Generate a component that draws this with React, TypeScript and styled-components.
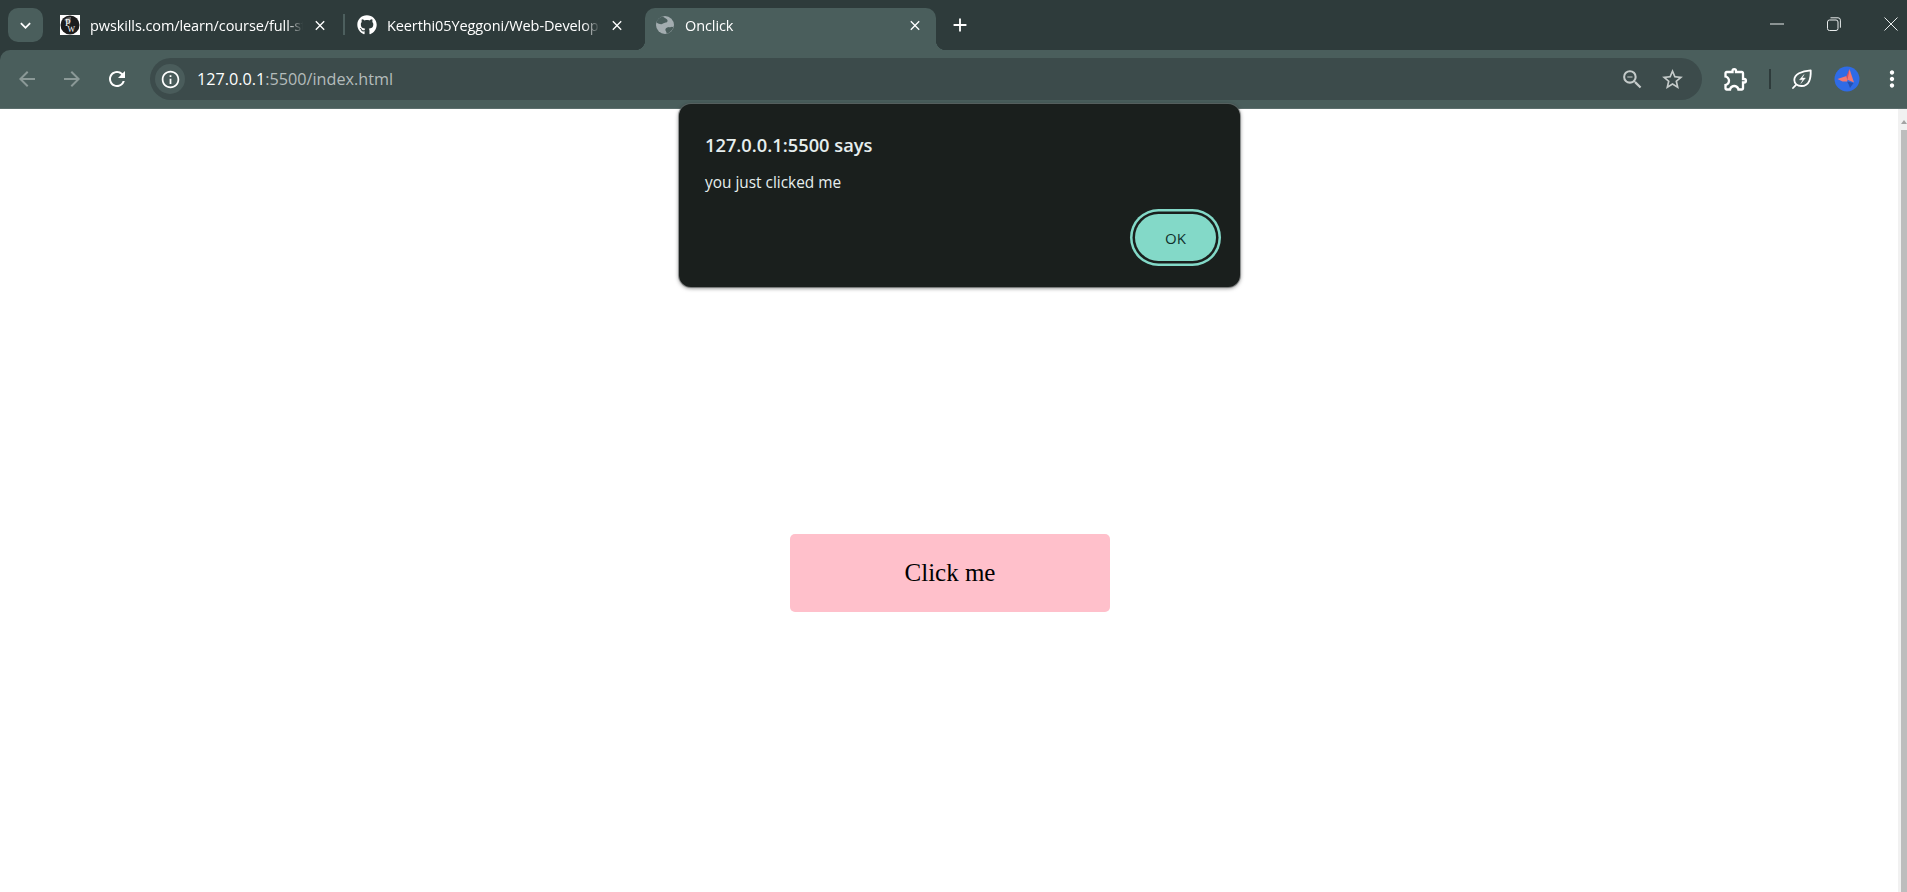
import React from 'react';
import styled, { createGlobalStyle } from 'styled-components';
import { FaGithub } from 'react-icons/fa';
import {
  MdArrowBack,
  MdArrowForward,
  MdClose,
  MdInfoOutline,
  MdKeyboardArrowDown,
  MdOutlineExtension,
  MdOutlineStarBorder,
  MdRefresh,
  MdZoomOut,
  MdAdd,
  MdMoreVert,
} from 'react-icons/md';

const GlobalStyle = createGlobalStyle`
  html, body {
    margin: 0;
    height: 100%;
    overflow: hidden;
    background: #fff;
  }
  #root {
    height: 100%;
  }
`;

const Window = styled.div`
  position: relative;
  display: flex;
  flex-direction: column;
  height: 892px;
  background: #2e3b3b;
  font-family: 'Open Sans', 'Noto Sans', sans-serif;
`;

const TabStrip = styled.div`
  display: flex;
  align-items: flex-end;
  height: 50px;
  color: #fff;
`;

const TabSearch = styled.button`
  display: flex;
  align-items: center;
  justify-content: center;
  width: 35px;
  height: 34px;
  margin: 0 9px 8px 8px;
  padding: 0;
  border: 0;
  border-radius: 10px;
  background: #4a5e5c;
  color: #fff;
  font-size: 21px;
`;

const Tab = styled.div<{ $width: number; $active?: boolean }>`
  position: relative;
  display: flex;
  align-items: center;
  flex: none;
  box-sizing: border-box;
  width: ${(p) => p.$width}px;
  height: 42px;
  margin-left: ${(p) => (p.$active ? 10 : 0)}px;
  padding: 0 ${(p) => (p.$active ? 13 : 10)}px 8px 8px;
  border-radius: 10px 10px 0 0;
  background: ${(p) => (p.$active ? '#4a5e5c' : 'transparent')};

  ${(p) =>
    p.$active &&
    `
    &::before, &::after {
      content: '';
      position: absolute;
      bottom: 0;
      width: 10px;
      height: 10px;
    }
    &::before {
      left: -10px;
      background: radial-gradient(circle at 0 0, transparent 10px, #4a5e5c 10.5px);
    }
    &::after {
      right: -10px;
      background: radial-gradient(circle at 100% 0, transparent 10px, #4a5e5c 10.5px);
    }
  `}
`;

const Favicon = styled.span`
  display: flex;
  flex: none;
  align-items: center;
  justify-content: center;
  width: 20px;
  height: 20px;
  margin-right: 10px;
  font-size: 20px;
  line-height: 0;
`;

const GlobeFavicon = styled(Favicon)`
  width: 18px;
  margin: 0 11px 0 3px;
`;

const TabTitle = styled.span`
  flex: 1;
  min-width: 0;
  margin-top: 2px;
  overflow: hidden;
  color: #fff;
  font-size: 14.5px;
  letter-spacing: -0.1px;
  line-height: 20px;
  white-space: nowrap;
  -webkit-mask-image: linear-gradient(to right, #000 calc(100% - 16px), transparent);
  mask-image: linear-gradient(to right, #000 calc(100% - 16px), transparent);
`;

const TabClose = styled.span`
  display: flex;
  flex: none;
  align-items: center;
  justify-content: center;
  width: 16px;
  margin-left: 9px;
  color: #fff;
  font-size: 17px;
`;

const TabDivider = styled.div`
  flex: none;
  width: 2px;
  height: 21px;
  margin: 0 4px 15px 5px;
  background: #4d5f5e;
`;

const NewTab = styled.span`
  display: flex;
  align-items: center;
  justify-content: center;
  width: 24px;
  height: 24px;
  margin: 0 0 13px 12px;
  color: #fff;
  font-size: 22px;
`;

const WindowControls = styled.div`
  display: flex;
  align-items: center;
  gap: 43px;
  height: 48px;
  margin: 0 9px 2px auto;
  color: #e8ecec;
  line-height: 0;
`;

const Toolbar = styled.div`
  display: flex;
  align-items: center;
  box-sizing: border-box;
  height: 59px;
  padding-left: 11px;
  border-bottom: 1px solid #5c6e6d;
  border-radius: 10px 0 0 0;
  background: #4a5e5c;
`;

const NavButton = styled.span<{ $dim?: boolean }>`
  display: flex;
  align-items: center;
  justify-content: center;
  flex: none;
  width: 32px;
  height: 32px;
  margin-right: 13px;
  color: ${(p) => (p.$dim ? '#8b9997' : '#fff')};
  font-size: 24px;
`;

const Omnibox = styled.div`
  display: flex;
  align-items: center;
  flex: none;
  box-sizing: border-box;
  width: 1552px;
  height: 42px;
  margin-left: 4px;
  padding: 0 17px 0 5px;
  border-radius: 21px;
  background: #3c4b4b;
`;

const SiteInfo = styled.span`
  display: flex;
  align-items: center;
  justify-content: center;
  flex: none;
  width: 30px;
  height: 30px;
  margin-right: 12px;
  border-radius: 50%;
  background: #4a5c5b;
  color: #fff;
  font-size: 21px;
`;

const Url = styled.span`
  color: #b4bcbb;
  font-size: 16.2px;
  white-space: nowrap;
`;

const UrlHost = styled.span`
  color: #fff;
`;

const OmniboxActions = styled.div`
  display: flex;
  align-items: center;
  gap: 15px;
  margin-left: auto;
  color: #c5cbca;
  font-size: 25px;
  line-height: 0;
`;

const ToolbarIcons = styled.div`
  display: flex;
  align-items: center;
  flex: 1;
  color: #fff;
  line-height: 0;
`;

const ExtensionButton = styled.span`
  display: flex;
  margin: 0 19px 0 20px;
  font-size: 28px;
`;

const ToolbarDivider = styled.span`
  width: 2px;
  height: 20px;
  margin-right: 21px;
  background: #2e3b3b;
`;

const Avatar = styled.span`
  display: flex;
  margin-left: 22px;
`;

const MenuButton = styled.span`
  display: flex;
  margin-left: 19px;
  font-size: 26px;
`;

const PageArea = styled.div`
  display: flex;
  flex: 1;
  min-height: 0;
  background: #fff;
`;

const Content = styled.main`
  display: flex;
  flex: 1;
  justify-content: center;
  padding: 425px 0 0 2px;
`;

const ClickButton = styled.button`
  width: 320px;
  height: 78px;
  padding: 0;
  border: 0;
  border-radius: 5px;
  background: #ffc0cb;
  color: #000;
  font-family: 'Liberation Serif', 'Times New Roman', serif;
  font-size: 25px;
`;

const Scrollbar = styled.div`
  display: flex;
  flex-direction: column;
  flex: none;
  box-sizing: border-box;
  width: 9px;
  padding-left: 3px;
  background: #f1f1f1;
`;

const ScrollArrow = styled.div`
  width: 0;
  height: 0;
  margin-top: 11px;
  border-right: 3px solid transparent;
  border-bottom: 4px solid #a3a3a3;
  border-left: 3px solid transparent;
`;

const ScrollThumb = styled.div`
  flex: 1;
  margin-top: 6px;
  background: #bdbdbd;
`;

const Dialog = styled.div`
  position: absolute;
  top: 104px;
  left: 679px;
  box-sizing: border-box;
  width: 561px;
  height: 183px;
  padding: 29px 24px 0 26px;
  border-radius: 12px;
  background: #1a1f1d;
  box-shadow: 0 1px 4px rgba(0, 0, 0, 0.55), 0 0 0 1px rgba(120, 125, 125, 0.55);
  color: #e6eeee;
`;

const DialogTitle = styled.div`
  font-size: 18.3px;
  font-weight: 600;
  line-height: 24px;
`;

const DialogMessage = styled.div`
  margin-top: 16px;
  font-size: 15.4px;
  line-height: 20px;
`;

const DialogActions = styled.div`
  display: flex;
  justify-content: flex-end;
  margin-top: 21px;
`;

const OkButton = styled.button`
  width: 81px;
  height: 47px;
  padding: 0;
  border: 0;
  border-radius: 24px;
  background: #83d9c8;
  box-shadow: 0 0 0 2.5px #1a1f1d, 0 0 0 5px #83d9c8;
  color: #10302c;
  font-family: 'Open Sans', 'Noto Sans', sans-serif;
  font-size: 15px;
`;

const PwLogo = () => (
  <svg width="20" height="20" viewBox="0 0 20 20">
    <rect width="20" height="20" fill="#fff" />
    <circle cx="10" cy="10" r="9.5" fill="#1c1c1c" />
    <path d="M4 5 A8 8 0 0 1 11 2 L10 10 Z" fill="#666" />
    <text x="5" y="10.5" fontFamily="Liberation Serif" fontSize="10" fill="#fff">P</text>
    <text x="7.5" y="17" fontFamily="Liberation Serif" fontSize="8" fill="#fff">W</text>
  </svg>
);

const GlobeIcon = () => (
  <svg width="18" height="18" viewBox="0 0 18 18">
    <circle cx="9" cy="9" r="9" fill="#a3adb0" />
    <path d="M7 0.6C9 2.5 12 3 11.5 5.2C11 7 8.5 6.2 7 7.5C5.5 8.8 3 8 0.4 6.5C1.3 3.6 3.8 1.2 7 0.6Z" fill="#4a5e5c" />
    <path d="M17.5 10.5C16.9 14 14 16.9 10.6 17.6C10.8 15.5 8.5 14.5 9.8 12.5C11.2 10.5 14.5 11.8 17.5 10.5Z" fill="#4a5e5c" />
  </svg>
);

const RestoreIcon = () => (
  <svg width="14" height="14" viewBox="0 0 14 14" fill="none" stroke="currentColor" strokeWidth="1">
    <rect x="0.5" y="3" width="10.5" height="10.5" rx="2" />
    <path d="M3.5 0.8h7.5a2.4 2.4 0 0 1 2.4 2.4v7.5" />
  </svg>
);

const CloseIcon = () => (
  <svg width="14" height="14" viewBox="0 0 14 14" stroke="currentColor" strokeWidth="1">
    <path d="M0.5 0.5 13.5 13.5M13.5 0.5 0.5 13.5" />
  </svg>
);

const MinimizeIcon = () => (
  <svg width="14" height="2" viewBox="0 0 14 2" stroke="currentColor" strokeWidth="1">
    <path d="M0 1h14" />
  </svg>
);

const LeafIcon = () => (
  <svg width="20" height="20" viewBox="0 0 20 20" fill="none" stroke="#fff" strokeWidth="1.8" strokeLinejoin="round">
    <path d="M18.7 1.3C19 9 17.5 17 9.5 17C5.2 17 2.3 14.6 2.3 11C2.3 5.5 9.5 1.8 18.7 1.3Z" />
    <path d="M1 19 4 15.8" strokeLinecap="round" />
    <path d="M12 5.5 7.5 10.8h3.4L8.8 14.5 13.4 9h-3.2Z" fill="#fff" strokeWidth="0.4" />
  </svg>
);

const AvatarIcon = () => (
  <svg width="26" height="26" viewBox="0 0 26 26">
    <circle cx="13" cy="13" r="12.5" fill="#2f6be6" />
    <path d="M15.5 3 20 16.5 13 13.5Z" fill="#f4776f" />
    <path d="M3.5 13 12.5 10 13.5 15.5 8.5 15.5Z" fill="#f4776f" />
    <path d="M13 15.5 19.5 17 16 22 14.5 18Z" fill="#2450b0" />
    <path d="M15.5 3 12.5 10 13.5 14Z" fill="#d9505a" />
  </svg>
);

export default function App() {
  return (
    <>
      <GlobalStyle />
      <Window>
        <TabStrip>
          <TabSearch>
            <MdKeyboardArrowDown />
          </TabSearch>
          <Tab $width={286}>
            <Favicon><PwLogo /></Favicon>
            <TabTitle>pwskills.com/learn/course/full-stack</TabTitle>
            <TabClose><MdClose /></TabClose>
          </Tab>
          <TabDivider />
          <Tab $width={286}>
            <Favicon><FaGithub /></Favicon>
            <TabTitle>Keerthi05Yeggoni/Web-Development</TabTitle>
            <TabClose><MdClose /></TabClose>
          </Tab>
          <Tab $width={291} $active>
            <GlobeFavicon><GlobeIcon /></GlobeFavicon>
            <TabTitle>Onclick</TabTitle>
            <TabClose><MdClose /></TabClose>
          </Tab>
          <NewTab><MdAdd /></NewTab>
          <WindowControls>
            <MinimizeIcon />
            <RestoreIcon />
            <CloseIcon />
          </WindowControls>
        </TabStrip>
        <Toolbar>
          <NavButton $dim><MdArrowBack /></NavButton>
          <NavButton $dim><MdArrowForward /></NavButton>
          <NavButton><MdRefresh /></NavButton>
          <Omnibox>
            <SiteInfo><MdInfoOutline /></SiteInfo>
            <Url><UrlHost>127.0.0.1</UrlHost>:5500/index.html</Url>
            <OmniboxActions>
              <MdZoomOut />
              <MdOutlineStarBorder />
            </OmniboxActions>
          </Omnibox>
          <ToolbarIcons>
            <ExtensionButton><MdOutlineExtension /></ExtensionButton>
            <ToolbarDivider />
            <LeafIcon />
            <Avatar><AvatarIcon /></Avatar>
            <MenuButton><MdMoreVert /></MenuButton>
          </ToolbarIcons>
        </Toolbar>
        <PageArea>
          <Content>
            <ClickButton>Click me</ClickButton>
          </Content>
          <Scrollbar>
            <ScrollArrow />
            <ScrollThumb />
          </Scrollbar>
        </PageArea>
        <Dialog>
          <DialogTitle>127.0.0.1:5500 says</DialogTitle>
          <DialogMessage>you just clicked me</DialogMessage>
          <DialogActions>
            <OkButton>OK</OkButton>
          </DialogActions>
        </Dialog>
      </Window>
    </>
  );
}
